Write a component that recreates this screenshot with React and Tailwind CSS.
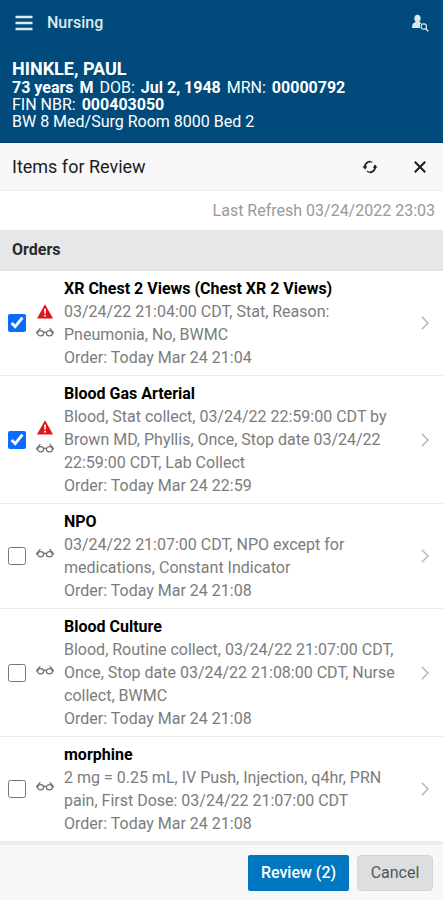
import React, { useState } from "react";

const ORDERS = [
  {
    id: "xr-chest",
    name: "XR Chest 2 Views (Chest XR 2 Views)",
    details: "03/24/22 21:04:00 CDT, Stat, Reason: Pneumonia, No, BWMC",
    ordered: "Order: Today Mar 24 21:04",
    critical: true
  },
  {
    id: "blood-gas",
    name: "Blood Gas Arterial",
    details:
      "Blood, Stat collect, 03/24/22 22:59:00 CDT by Brown MD, Phyllis, Once, Stop date 03/24/22 22:59:00 CDT, Lab Collect",
    ordered: "Order: Today Mar 24 22:59",
    critical: true
  },
  {
    id: "npo",
    name: "NPO",
    details: "03/24/22 21:07:00 CDT, NPO except for medications, Constant Indicator",
    ordered: "Order: Today Mar 24 21:08",
    critical: false
  },
  {
    id: "blood-culture",
    name: "Blood Culture",
    details:
      "Blood, Routine collect, 03/24/22 21:07:00 CDT, Once, Stop date 03/24/22 21:08:00 CDT, Nurse collect, BWMC",
    ordered: "Order: Today Mar 24 21:08",
    critical: false
  },
  {
    id: "morphine",
    name: "morphine",
    details: "2 mg = 0.25 mL, IV Push, Injection, q4hr, PRN pain, First Dose: 03/24/22 21:07:00 CDT",
    ordered: "Order: Today Mar 24 21:08",
    critical: false
  }
];

function MenuIcon() {
  return (
    <svg className="w-[18px] h-4" viewBox="0 0 18 16" fill="none" stroke="currentColor" strokeWidth="2.4">
      <path d="M0.5 2h17M0.5 8h17M0.5 14h17" />
    </svg>
  );
}

function PatientSearchIcon() {
  return (
    <svg className="w-[18px] h-[18px]" viewBox="0 0 18 18" fill="none">
      <ellipse cx="6.5" cy="4.4" rx="3.1" ry="3.6" fill="currentColor" />
      <path d="M1 14c0-3.8 1.4-5.4 3.6-6h3.8c1.3.4 2 1 2.4 1.8H9V14z" fill="currentColor" />
      <circle cx="12.8" cy="12.6" r="2.7" stroke="currentColor" strokeWidth="1.1" />
      <path d="M14.8 14.7l2.4 2.5" stroke="currentColor" strokeWidth="1.5" />
    </svg>
  );
}

function RefreshIcon() {
  return (
    <svg className="w-4 h-4" viewBox="0 0 16 16" fill="none" stroke="currentColor" strokeWidth="1.8">
      <path d="M2.8 8.6A5.3 5.3 0 0 1 8.6 2.7" />
      <path d="M13.2 7.4a5.3 5.3 0 0 1-5.8 5.9" />
      <path d="M8.6 2.7l1.8.6M7.4 13.3l-2.6-1" strokeWidth="1.2" />
      <path d="M0.4 7.4l2.8 3 2-3.2zM15.6 8.6l-2.8-3-2 3.2z" fill="currentColor" stroke="none" />
    </svg>
  );
}

function CloseIcon() {
  return (
    <svg className="w-3 h-3" viewBox="0 0 12 12" fill="none" stroke="currentColor" strokeWidth="2">
      <path d="M0.8 0.8l10.4 10.4M11.2 0.8L0.8 11.2" />
    </svg>
  );
}

function CriticalIcon() {
  return (
    <svg className="w-4 h-[15px]" viewBox="0 0 16 15" role="img" aria-label="Critical">
      <path d="M8 0.3L16 14.5H0z" fill="#e0141b" />
      <path d="M7 4.8h2l-.3 5H7.3zM7.1 10.9h1.8v1.7H7.1z" fill="#fff" />
    </svg>
  );
}

function GlassesIcon() {
  return (
    <svg
      className="w-[18px] h-[10px]"
      viewBox="0 0 18 10"
      fill="none"
      stroke="#707070"
      strokeWidth="1.2"
      role="img"
      aria-label="Needs review"
    >
      <ellipse cx="4.6" cy="6.2" rx="3" ry="2.6" />
      <ellipse cx="13.4" cy="6.2" rx="3" ry="2.6" />
      <path d="M7.6 5.8c.7-.7 2.1-.7 2.8 0M1.8 5.8H.4L4.4 1.2M16.2 5.8h1.4L13.6 1.2" />
    </svg>
  );
}

function ChevronIcon() {
  return (
    <svg className="w-2 h-[14px]" viewBox="0 0 8 14" fill="none" stroke="currentColor" strokeWidth="1.4">
      <path d="M0.8 0.8L7 7l-6.2 6.2" />
    </svg>
  );
}

function OrderRow({ order, checked, onToggle }) {
  return (
    <li className="flex items-center border-b border-[#ececec] py-[6px] pl-2 pr-[14px]">
      <input
        id={order.id}
        type="checkbox"
        checked={checked}
        onChange={onToggle}
        className="w-[18px] h-[18px] shrink-0 accent-[#0a6cff]"
      />
      <div className="flex flex-col items-center gap-2 w-[18px] shrink-0 ml-[10px] mr-[10px] pb-[6px]">
        {order.critical && <CriticalIcon />}
        <GlassesIcon />
      </div>
      <div className="flex-1 min-w-0 pr-4 text-base leading-[23px] text-[#7c7c7c]">
        <label htmlFor={order.id} className="block font-bold text-black">
          {order.name}
        </label>
        <p>{order.details}</p>
        <p>{order.ordered}</p>
      </div>
      <button aria-label={`Open ${order.name}`} className="shrink-0 text-[#b4b4b4]">
        <ChevronIcon />
      </button>
    </li>
  );
}

export default function App() {
  const [selected, setSelected] = useState(["xr-chest", "blood-gas"]);

  const toggle = id => {
    setSelected(prev => (prev.includes(id) ? prev.filter(x => x !== id) : [...prev, id]));
  };

  return (
    <div className="min-h-screen flex flex-col bg-white font-[Roboto,sans-serif]">
      <header className="bg-[#004b7c] text-white border-b border-[#003a66]">
        <div className="flex items-center h-[46px] pl-[15px] pr-[14px] text-[#dce8f0]">
          <button aria-label="Menu">
            <MenuIcon />
          </button>
          <span className="ml-[14px] text-base font-medium">Nursing</span>
          <button aria-label="Find patient" className="ml-auto">
            <PatientSearchIcon />
          </button>
        </div>
        <div className="px-3 py-3 text-base leading-[17px]">
          <h1 className="text-lg leading-[21px] font-bold">HINKLE, PAUL</h1>
          <p>
            <b>73 years</b> <b className="ml-0.5">M</b> <span className="ml-0.5">DOB:</span>{" "}
            <b className="ml-0.5">Jul 2, 1948</b> <span className="ml-0.5">MRN:</span>{" "}
            <b className="ml-0.5">00000792</b>
          </p>
          <p>
            FIN NBR: <b className="ml-0.5">000403050</b>
          </p>
          <p>BW 8 Med/Surg Room 8000 Bed 2</p>
        </div>
      </header>

      <div className="flex items-center h-12 bg-[#f8f8f8] border-b border-[#f2f2f2] pl-3 pr-[17px] text-[#1c1c1c]">
        <h2 className="text-lg">Items for Review</h2>
        <button aria-label="Refresh" className="ml-auto">
          <RefreshIcon />
        </button>
        <button aria-label="Close" className="ml-9">
          <CloseIcon />
        </button>
      </div>

      <p className="h-[39px] leading-[39px] px-2 text-right text-base text-[#999]">
        Last Refresh 03/24/2022 23:03
      </p>

      <h3 className="h-[41px] leading-10 px-3 bg-[#e6e7e8] border-b border-[#dcdddd] text-base font-bold text-[#2a2a2a]">
        Orders
      </h3>

      <ul>
        {ORDERS.map(order => (
          <OrderRow
            key={order.id}
            order={order}
            checked={selected.includes(order.id)}
            onToggle={() => toggle(order.id)}
          />
        ))}
      </ul>

      <footer className="sticky bottom-0 mt-auto flex justify-end gap-2 pt-[10px] pb-[9px] px-[10px] bg-[#f8f8f8] border-t-[3px] border-[#eeeeee]">
        <button className="h-9 w-[101px] rounded-xs bg-[#0077c0] text-white text-base font-medium">
          Review ({selected.length})
        </button>
        <button className="h-9 w-[76px] rounded-sm bg-[#dcdedf] border border-[#d2d4d5] text-[#555] text-base">
          Cancel
        </button>
      </footer>
    </div>
  );
}
